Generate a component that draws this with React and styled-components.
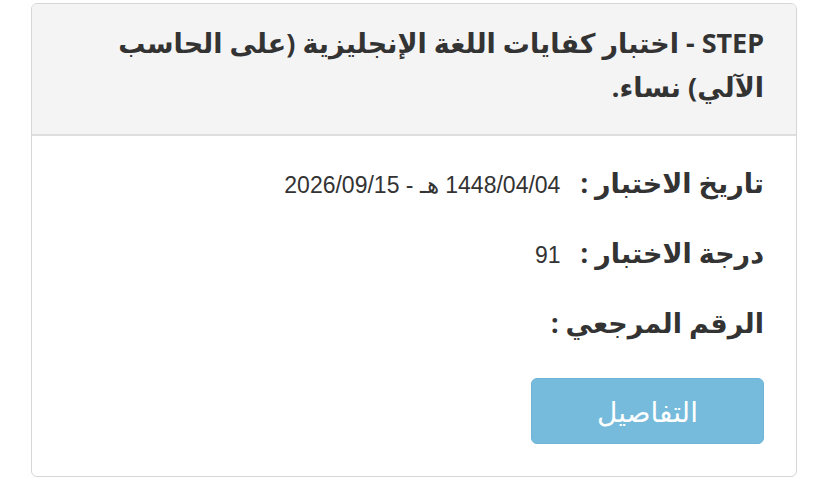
import React from 'react'
import styled, { createGlobalStyle } from 'styled-components'

const GlobalStyle = createGlobalStyle`
   html, body {
      margin: 0;
      padding: 0;
      background: #fff;
   }
   body {
      font-family: 'Noto Sans', 'DejaVu Sans', sans-serif;
   }
`

const rows = [
   { label: 'تاريخ الاختبار :', value: '1448/04/04 هـ - 2026/09/15' },
   { label: 'درجة الاختبار :', value: '91' },
   { label: 'الرقم المرجعي :', value: '', hidden: true },
]

export default function App() {
   return (
      <>
         <GlobalStyle />
         <Page>
            <Card dir="rtl">
               <Header>
                  <Title>STEP - اختبار كفايات اللغة الإنجليزية (على الحاسب الآلي) نساء.</Title>
               </Header>
               <Body>
                  {rows.map((row) => (
                     <Row key={row.label}>
                        <Label>{row.label}</Label>
                        <Value $hidden={row.hidden}>{row.value}</Value>
                     </Row>
                  ))}
                  <DetailsButton>التفاصيل</DetailsButton>
               </Body>
            </Card>
         </Page>
      </>
   )
}

const Page = styled('div')(() => ({
   padding: '3px 31px 2px 31px',
}))
const Card = styled('div')(() => ({
   border: '1px solid #d6d6d6',
   borderRadius: '6px',
   overflow: 'hidden',
   background: '#fff',
   height: '474px',
   boxSizing: 'border-box',
}))
const Header = styled('div')(() => ({
   background: '#f4f4f4',
   borderBottom: '2px solid #dedede',
   padding: '17px 32px 0 32px',
   height: '132px',
   boxSizing: 'border-box',
}))
const Title = styled('h3')(() => ({
   margin: 0,
   fontSize: '27px',
   fontWeight: 700,
   lineHeight: '44px',
   color: '#333',
}))
const Body = styled('div')(() => ({
   padding: '28px 32px 0 32px',
   display: 'flex',
   flexDirection: 'column',
   alignItems: 'flex-start',
}))
const Row = styled('div')(() => ({
   display: 'flex',
   alignItems: 'baseline',
   gap: '20px',
   height: '70px',
}))
const Label = styled('span')(() => ({
   fontSize: '27px',
   fontWeight: 700,
   color: '#333',
}))
const Value = styled('span')(({ $hidden }) => ({
   fontFamily: "'Liberation Sans', Arial, sans-serif",
   fontSize: '23px',
   color: $hidden ? '#f2f2f2' : '#333',
}))
const DetailsButton = styled('button')(() => ({
   marginTop: '4px',
   width: '233px',
   height: '66px',
   border: '1px solid #6cb5d8',
   borderRadius: '6px',
   background: '#76bbdc',
   color: '#fff',
   fontFamily: "'Noto Sans', 'DejaVu Sans', sans-serif",
   fontSize: '28px',
   fontWeight: 400,
   cursor: 'pointer',
}))
